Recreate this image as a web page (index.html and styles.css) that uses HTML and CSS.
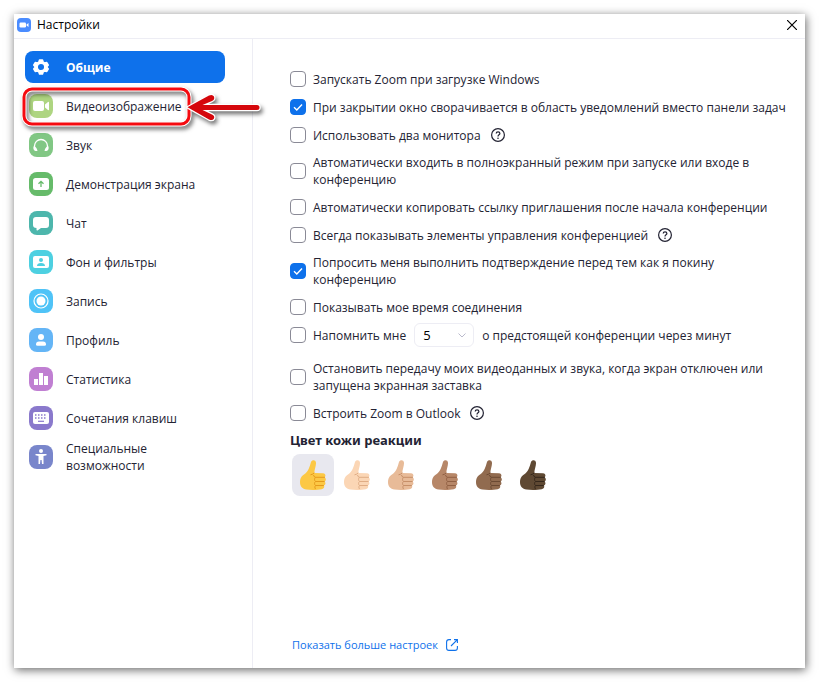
FILE: index.html
```html
<!DOCTYPE html>
<html lang="ru">
<head>
<meta charset="utf-8">
<meta name="viewport" content="width=device-width, initial-scale=1">
<title>Настройки</title>
<link rel="stylesheet" href="styles.css">
</head>
<body>
<svg class="defs" aria-hidden="true">
  <symbol id="thumb" viewBox="0 0 26 30">
    <path fill="currentColor" d="M11 2C11.800-.3 15.800-.6 16 2.800c.2 3-1.600 6.700-1.700 10.200l8.700.2c3 .1 3.100 3.600 1 4.100 2.500.5 2.300 3.800.3 4.300 1.800.7 1.400 3.600-.6 4 1.200 1.100.4 3.300-2 3.600-3.800.8-10.800 1-15.200.3C2.400 28.800 0 26.200 0 22.200c0-4.300 1.700-6.200 4.700-8.200C8.200 11.600 9.600 7 11 2z"/>
    <path class="fingers" d="M10.500 14.800c1.600-.2 3-.9 3.800-2M25 17.300H15.500q-2-.6-2-2.300M24.600 21.500H15.500M23.800 25.500H15.500M15.500 17.300c-1.300 1.200-1.300 3 0 4.200-1.300 1.200-1.300 2.800 0 4-.8 1-.8 2.300 0 3.500"/>
  </symbol>
  <symbol id="help" viewBox="0 0 14 14">
    <circle cx="7" cy="7" r="6.400" fill="none" stroke="currentColor" stroke-width="1.200"/>
    <path d="M5.200 5.600c0-2.400 3.700-2.400 3.700 0C8.900 6.900 7 6.800 7 8.400" fill="none" stroke="currentColor" stroke-width="1.200"/>
    <circle cx="7" cy="10.200" r=".8" fill="currentColor"/>
  </symbol>
</svg>
<div class="window">
  <header class="titlebar">
    <svg class="logo" viewBox="0 0 14 14" aria-hidden="true"><rect width="14" height="14" rx="4" fill="#4a8cff"/><rect x="2.500" y="4.500" width="6.500" height="5" rx="1.200" fill="#fff"/><path d="M9.500 6.400l2-1.500v4.200l-2-1.500z" fill="#fff"/></svg>
    <h1 class="title">Настройки</h1>
    <button class="close" type="button" aria-label="Закрыть"><svg viewBox="0 0 10 10"><path d="M0 0L10 10M10 0L0 10" stroke="#000" stroke-width="1.200"/></svg></button>
  </header>
  <div class="body">
    <nav class="sidebar">
      <a class="item active" href="#general" aria-current="page">
        <svg class="icon" viewBox="0 0 24 24"><path fill="#fff" stroke="#fff" stroke-width="1.500" stroke-linejoin="round" fill-rule="evenodd" d="M10.500 5h3l.7 2.200 1.300.8 2.300-.5 1.500 2.600-1.600 1.900 1.600 1.900-1.500 2.600-2.300-.5-1.300.8-.7 2.200h-3l-.7-2.200-1.300-.8-2.300.5-1.500-2.600L6.300 12l-1.600-1.900 1.500-2.600 2.300.5 1.300-.8zM12 8.200a3.800 3.800 0 1 0 0 7.600 3.800 3.800 0 0 0 0-7.600z"/></svg>
        <span>Общие</span></a>
      <a class="item" href="#video">
        <svg class="icon" viewBox="0 0 24 24"><rect width="24" height="24" rx="8" fill="#aed581"/><rect x="4" y="7" width="11" height="10" rx="2" fill="#fff"/><path fill="#fff" d="M16 10.500l3-2.500q1-.6 1 .6v6.800q0 1.200-1 .6l-3-2.500z"/></svg>
        <span>Видеоизображение</span>
        <svg class="callout" viewBox="0 0 244 50" aria-hidden="true">
          <rect x="2" y="7" width="165" height="35" rx="8" fill="none" stroke="#fff" stroke-width="5"/>
          <rect x="2" y="7" width="165" height="35" rx="8" fill="none" stroke="#f50a10" stroke-width="3"/>
          <path d="M165.500 25.300L187 13.500q3.500-1.500 5 1 1 3-2 4.500L180.500 23H235a2.500 2.500 0 0 1 0 5H180.500L190 32.500q3 1.500 2 4-1.500 2.500-5 1z" fill="#d5070c" stroke="#fff" stroke-width="2.500" stroke-linejoin="round" paint-order="stroke"/>
        </svg></a>
      <a class="item" href="#audio">
        <svg class="icon" viewBox="0 0 24 24"><rect width="24" height="24" rx="8" fill="#81c784"/><path d="M5.500 16v-3a6.500 6.500 0 0 1 13 0v3" fill="none" stroke="#fff" stroke-width="1.300"/><path fill="#fff" d="M4.500 13.500q3-.5 4 4.500h-2q-2.500-.5-2-4.500zM19.500 13.500q-3-.5-4 4.500h2q2.500-.5 2-4.500z"/></svg>
        <span>Звук</span></a>
      <a class="item" href="#share">
        <svg class="icon" viewBox="0 0 24 24"><rect width="24" height="24" rx="8" fill="#66bb6a"/><rect x="4" y="6" width="16" height="12" rx="2.500" fill="#fff"/><path d="M12 15V10M9.500 11.800L12 9.300l2.500 2.500" fill="none" stroke="#66bb6a" stroke-width="1.300"/></svg>
        <span>Демонстрация экрана</span></a>
      <a class="item" href="#chat">
        <svg class="icon" viewBox="0 0 24 24"><rect width="24" height="24" rx="8" fill="#4db6ac"/><path fill="#fff" d="M7 6h10q3 0 3 3v5q0 3-3 3h-5l-3.500 2.500q-1 .3-1-.7V17Q4 17 4 14V9q0-3 3-3z"/></svg>
        <span>Чат</span></a>
      <a class="item" href="#background">
        <svg class="icon" viewBox="0 0 24 24"><rect width="24" height="24" rx="8" fill="#4dd0e1"/><rect x="4" y="6" width="16" height="12" rx="2" fill="#fff"/><circle cx="12" cy="10" r="2" fill="#4dd0e1"/><path fill="#4dd0e1" d="M8 16q0-3 4-3t4 3z"/></svg>
        <span>Фон и фильтры</span></a>
      <a class="item" href="#recording">
        <svg class="icon" viewBox="0 0 24 24"><rect width="24" height="24" rx="8" fill="#4fc3f7"/><circle cx="12" cy="12" r="7" fill="none" stroke="#fff" stroke-width="1.200"/><circle cx="12" cy="12" r="4.500" fill="#fff"/></svg>
        <span>Запись</span></a>
      <a class="item" href="#profile">
        <svg class="icon" viewBox="0 0 24 24"><rect width="24" height="24" rx="8" fill="#64b5f6"/><circle cx="12" cy="9" r="3" fill="#fff"/><path fill="#fff" d="M7 16.500q0-3 3-3h4q3 0 3 3 0 1.200-1.500 1.200h-7Q7 17.700 7 16.500z"/></svg>
        <span>Профиль</span></a>
      <a class="item" href="#statistics">
        <svg class="icon" viewBox="0 0 24 24"><rect width="24" height="24" rx="8" fill="#c07fd2"/><path fill="#fff" d="M5 12h4v6H5zM10 6h4v12h-4zM15 9h4v9h-4z"/></svg>
        <span>Статистика</span></a>
      <a class="item" href="#shortcuts">
        <svg class="icon" viewBox="0 0 24 24"><rect width="24" height="24" rx="8" fill="#8a79cc"/><rect x="4" y="6" width="16" height="12" rx="2" fill="#fff"/><path d="M6 9h12M6 12h12" stroke="#8a79cc" stroke-width="1.600" stroke-dasharray="1.500 1.500"/><path d="M9 15.300h6" stroke="#8a79cc" stroke-width="1.200"/></svg>
        <span>Сочетания клавиш</span></a>
      <a class="item" href="#accessibility">
        <svg class="icon" viewBox="0 0 24 24"><rect width="24" height="24" rx="8" fill="#7986cb"/><circle cx="12" cy="6" r="2" fill="#fff"/><path fill="#fff" d="M6.500 9h11v1.300l-3 .7v8H13l-.4-4h-1.200L11 19H9.500v-8l-3-.7z"/></svg>
        <span>Специальные возможности</span></a>
    </nav>
    <main class="content">
      <div class="options">
        <div class="option"><input type="checkbox" id="o1"><label for="o1">Запускать Zoom при загрузке Windows</label></div>
        <div class="option"><input type="checkbox" id="o2" checked><label for="o2">При закрытии окно сворачивается в область уведомлений вместо панели задач</label></div>
        <div class="option"><input type="checkbox" id="o3"><label for="o3">Использовать два монитора</label><svg class="help"><use href="#help"/></svg></div>
        <div class="option"><input type="checkbox" id="o4"><label for="o4">Автоматически входить в полноэкранный режим при запуске или входе в конференцию</label></div>
        <div class="option"><input type="checkbox" id="o5"><label for="o5">Автоматически копировать ссылку приглашения после начала конференции</label></div>
        <div class="option"><input type="checkbox" id="o6"><label for="o6">Всегда показывать элементы управления конференцией</label><svg class="help"><use href="#help"/></svg></div>
        <div class="option"><input type="checkbox" id="o7" checked><label for="o7">Попросить меня выполнить подтверждение перед тем как я покину<br>конференцию</label></div>
        <div class="option"><input type="checkbox" id="o8"><label for="o8">Показывать мое время соединения</label></div>
        <div class="option reminder"><input type="checkbox" id="o9"><label for="o9">Напомнить мне</label><select class="minutes" aria-label="Минуты"><option>5</option></select><span>о предстоящей конференции через минут</span></div>
        <div class="option"><input type="checkbox" id="o10"><label for="o10">Остановить передачу моих видеоданных и звука, когда экран отключен или запущена экранная заставка</label></div>
        <div class="option"><input type="checkbox" id="o11"><label for="o11">Встроить Zoom в Outlook</label><svg class="help"><use href="#help"/></svg></div>
      </div>
      <h2 class="heading">Цвет кожи реакции</h2>
      <div class="tones">
        <button class="tone tone-yellow selected" type="button" aria-label="Жёлтый"><svg><use href="#thumb"/></svg></button>
        <button class="tone tone-light" type="button" aria-label="Светлый"><svg><use href="#thumb"/></svg></button>
        <button class="tone tone-fair" type="button" aria-label="Умеренно светлый"><svg><use href="#thumb"/></svg></button>
        <button class="tone tone-medium" type="button" aria-label="Средний"><svg><use href="#thumb"/></svg></button>
        <button class="tone tone-brown" type="button" aria-label="Умеренно тёмный"><svg><use href="#thumb"/></svg></button>
        <button class="tone tone-dark" type="button" aria-label="Тёмный"><svg><use href="#thumb"/></svg></button>
      </div>
      <a class="more" href="#more">Показать больше настроек<svg viewBox="0 0 12 12"><path d="M5 .6H3Q.6.600.6 3v6q0 2.400 2.400 2.400h6q2.400 0 2.400-2.400V7M8 .6h3.400V4M11.400.600L5 7" fill="none" stroke="currentColor" stroke-width="1.100"/></svg></a>
    </main>
  </div>
</div>
</body>
</html>
```
FILE: styles.css
```css
* { box-sizing: border-box; }

body {
  margin: 0;
  padding: 14px;
  min-height: 100vh;
  display: flex;
  background: #fff;
  color: #232333;
  font: 12px/17px "Open Sans", "Noto Sans", sans-serif;
}

.defs { position: absolute; width: 0; height: 0; }

.window {
  flex: 1;
  display: flex;
  flex-direction: column;
  background: #fff;
  box-shadow: 1px 2px 9px rgba(0, 0, 0, .6);
}

.titlebar {
  display: flex;
  align-items: center;
  gap: 6px;
  height: 25px;
  padding: 0 8px 2px 3px;
  border-bottom: 1px solid #ededf4;
}
.logo { width: 14px; height: 14px; }
.title { margin: 0; font-size: 12px; line-height: 16px; font-weight: 400; color: #000; }
.close {
  display: flex;
  margin-left: auto;
  padding: 0;
  border: 0;
  background: none;
}
.close svg { width: 10px; height: 10px; }

.body { flex: 1; display: flex; }

.sidebar {
  display: flex;
  flex-direction: column;
  gap: 7px;
  flex: 0 0 239px;
  padding: 12px 27px 12px 11px;
  border-right: 1px solid #ededf4;
}
.item {
  position: relative;
  display: flex;
  align-items: center;
  gap: 13px;
  height: 32px;
  padding: 0 4px;
  border-radius: 8px;
  color: inherit;
  text-decoration: none;
}
.item.active { background: #0e71eb; color: #fff; font-weight: 700; }
.icon { flex: none; width: 24px; height: 24px; }
.callout {
  position: absolute;
  z-index: 1;
  left: -3px;
  top: -8px;
  width: 244px;
  height: 50px;
  overflow: visible;
  filter: drop-shadow(2px 3px 2px rgba(0, 0, 0, .55));
}

.content {
  flex: 1;
  display: flex;
  flex-direction: column;
  align-items: flex-start;
  padding: 31px 4px 15px 37px;
}
.options { display: flex; flex-direction: column; gap: 10px; }
.option {
  display: flex;
  align-items: center;
  gap: 8px;
  min-height: 18px;
}
.option input {
  appearance: none;
  flex: none;
  width: 16px;
  height: 16px;
  margin: 0 -1px 0 0;
  border: 1px solid #8a8a96;
  border-radius: 4px;
  background: #fff;
}
.option input:checked {
  border-color: #0e71eb;
  background: #0e71eb url("data:image/svg+xml,%3Csvg xmlns='http://www.w3.org/2000/svg' viewBox='0 0 14 14'%3E%3Cpath d='M3 7.300l2.800 2.700L11 4.500' fill='none' stroke='white' stroke-width='1.400'/%3E%3C/svg%3E");
}
.help { width: 14px; height: 14px; margin-left: 2px; color: #232333; }
.reminder { height: 18px; margin-bottom: 6px; }
.minutes {
  appearance: none;
  width: 60px;
  height: 24px;
  padding: 0 8px;
  border: 1px solid #ededf4;
  border-radius: 6px;
  background: #fff url("data:image/svg+xml,%3Csvg xmlns='http://www.w3.org/2000/svg' viewBox='0 0 8 5'%3E%3Cpath d='M.5.500L4 4 7.500.5' fill='none' stroke='%23babacc'/%3E%3C/svg%3E") no-repeat right 7px center / 8px 5px;
  color: #000;
  font: inherit;
  font-size: 13px;
}

.heading { margin: 9px 0 5px; font: 700 13px/18px "Noto Sans", "Open Sans", sans-serif; }
.tones { display: flex; gap: 2px; padding-left: 2px; }
.tone {
  display: grid;
  place-items: center;
  width: 42px;
  height: 42px;
  padding: 0;
  border: 0;
  border-radius: 8px;
  background: none;
}
.tone.selected { background: #e8e8ef; }
.tone svg { width: 26px; height: 30px; }
.fingers { fill: none; stroke: var(--line); stroke-width: 1; }
.tone-yellow { color: #fcc845; --line: #e59a1c; }
.tone-light { color: #fbd6b5; --line: #e0ad85; }
.tone-fair { color: #e8bb98; --line: #c68f68; }
.tone-medium { color: #b78768; --line: #916043; }
.tone-brown { color: #916b4f; --line: #6b4a33; }
.tone-dark { color: #5f4933; --line: #35271b; }

.more {
  display: flex;
  align-items: center;
  gap: 8px;
  margin: auto 0 0 2px;
  color: #0e71eb;
  font-size: 11px;
  text-decoration: none;
}
.more svg { width: 12px; height: 12px; }
```
